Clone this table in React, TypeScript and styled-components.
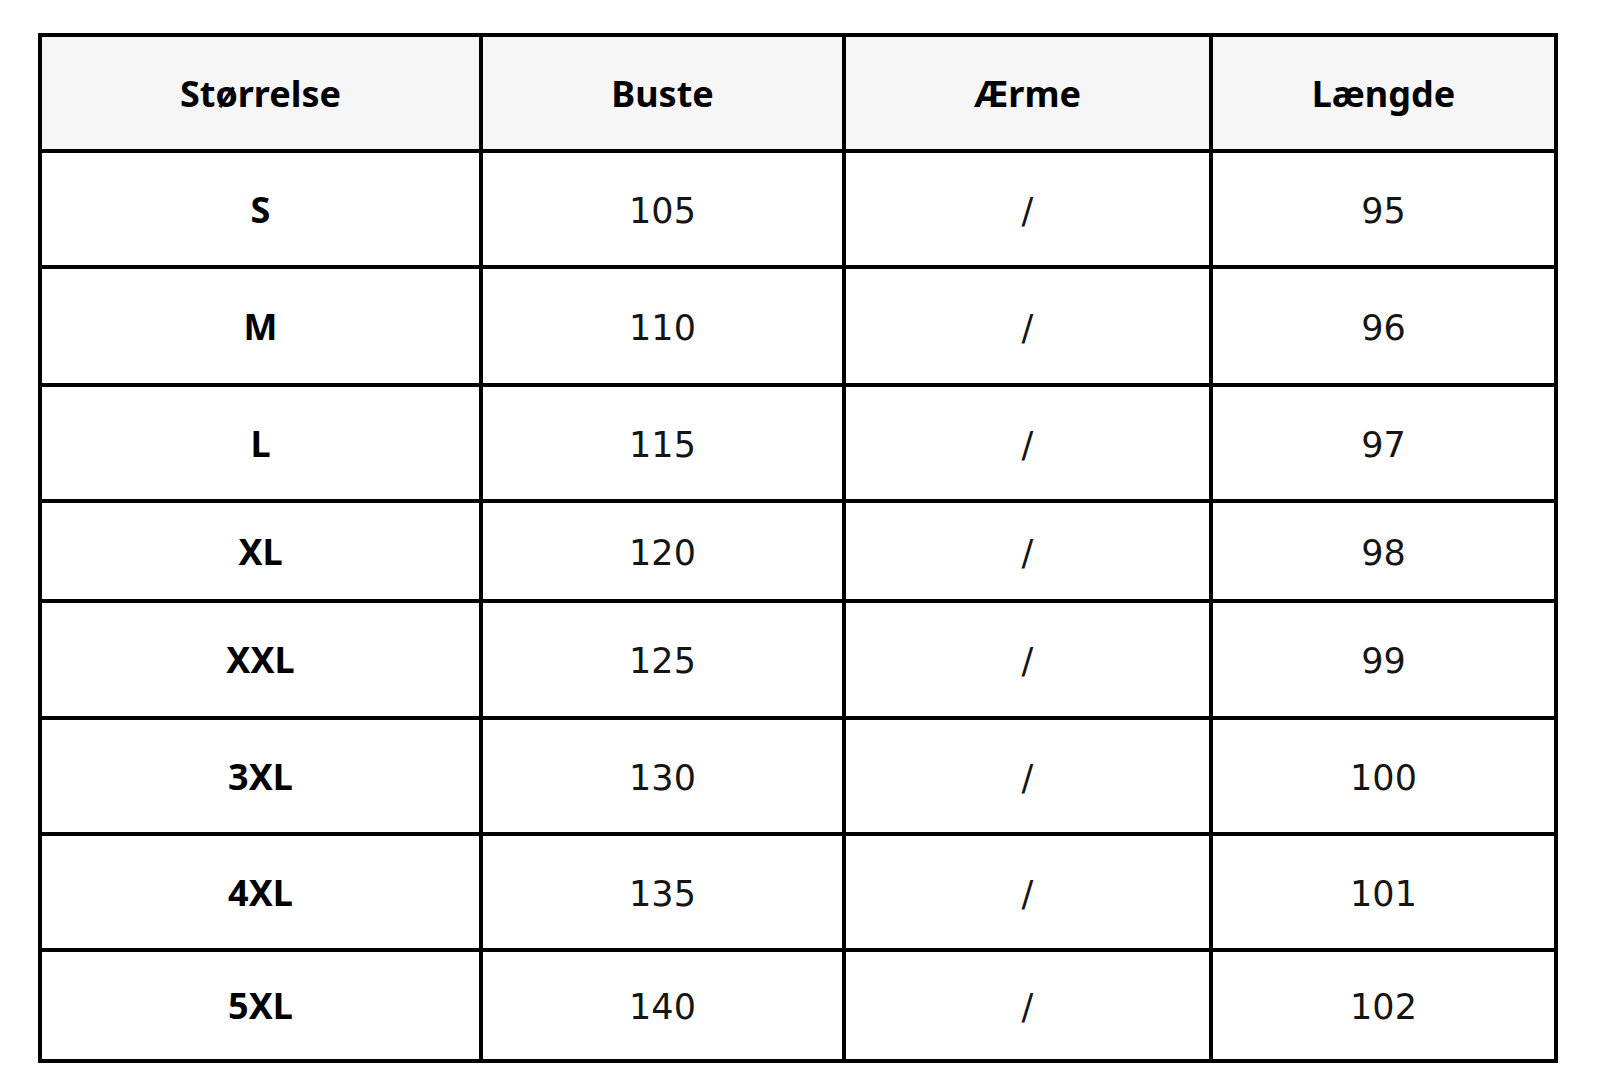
import React from "react";
import styled, { createGlobalStyle } from "styled-components";

const rows = [
    { size: "S", bust: "105", sleeve: "/", length: "95", h: 112 },
    { size: "M", bust: "110", sleeve: "/", length: "96", h: 114 },
    { size: "L", bust: "115", sleeve: "/", length: "97", h: 112 },
    { size: "XL", bust: "120", sleeve: "/", length: "98", h: 96 },
    { size: "XXL", bust: "125", sleeve: "/", length: "99", h: 113 },
    { size: "3XL", bust: "130", sleeve: "/", length: "100", h: 112 },
    { size: "4XL", bust: "135", sleeve: "/", length: "101", h: 112 },
    { size: "5XL", bust: "140", sleeve: "/", length: "102", h: 107 },
];

const headers = ["Størrelse", "Buste", "Ærme", "Længde"];

const App = () => {
    return (
        <>
            <GlobalStyle/>
            <Page>
                <Table $rows={[112, ...rows.map(r => r.h)]}>
                    {headers.map(h => (
                        <HeadCell key={h}>{h}</HeadCell>
                    ))}
                    {rows.map(r => (
                        <React.Fragment key={r.size}>
                            <SizeCell>{r.size}</SizeCell>
                            <Cell>{r.bust}</Cell>
                            <Cell>{r.sleeve}</Cell>
                            <Cell>{r.length}</Cell>
                        </React.Fragment>
                    ))}
                </Table>
            </Page>
        </>
    );
};

const GlobalStyle = createGlobalStyle`
    html, body {
        margin: 0;
        padding: 0;
        background: #ffffff;
    }
`

const Page = styled.main`
    padding: 33px 0 0 38px;
    min-height: 1080px;
    box-sizing: border-box;
`

const Table = styled.div<{ $rows: number[] }>`
    display: grid;
    grid-template-columns: 437px 359px 363px 341px;
    grid-template-rows: ${p => p.$rows.map(h => `${h}px`).join(" ")};
    gap: 4px;
    padding: 4px;
    width: max-content;
    background: #000000;
`

const Cell = styled.div`
    display: flex;
    align-items: center;
    justify-content: center;
    padding-top: 3px;
    background: #ffffff;
    color: #151515;
    font-family: "DejaVu Sans", sans-serif;
    font-size: 35px;
    font-weight: 400;
`

const SizeCell = styled(Cell)`
    padding-top: 0;
    font-family: "Noto Sans", sans-serif;
    font-weight: 700;
    font-size: 36px;
    color: #000000;
`

const HeadCell = styled(SizeCell)`
    background: #f6f6f6;
`

export default App;
